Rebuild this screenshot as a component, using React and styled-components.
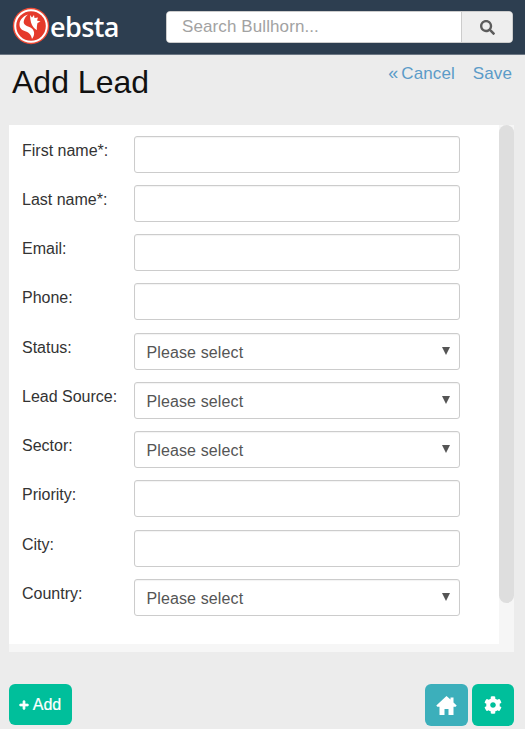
import React from "react";
import styled, { createGlobalStyle } from "styled-components";
import { FaCog, FaSearch, FaPlus } from "react-icons/fa";

const Global = createGlobalStyle`
  html, body { margin: 0; padding: 0; background: #ececec; }
  body { font-family: "Liberation Sans", Arial, sans-serif; }
  * { box-sizing: border-box; }
`;

const Page = styled.div`
  width: 525px; height: 729px; display: flex; flex-direction: column; overflow: hidden; background: #ececec;
`;
const Header = styled.header`
  height: 55px; flex: none; background: #2d3e50; border-bottom: 1px solid #6b7683;
  display: flex; align-items: flex-start; padding: 11px 12px 0 12px;
`;
const Brand = styled.div`
  width: 154px; height: 32px; display: flex; align-items: center; gap: 2px; margin-top: -1px;
`;
const BrandName = styled.span`
  color: #fff; font-family: "Open Sans", sans-serif; font-size: 27px; font-weight: 600; line-height: 32px; letter-spacing: -0.6px; margin-top: 2px; margin-left: -2px;
`;
const Search = styled.div`
  width: 347px; height: 32px; display: flex; border-radius: 4px; overflow: hidden; border: 1px solid #ccc; background: #fff;
`;
const SearchInput = styled.div`
  flex: 1; color: #a2a2a2; font-size: 17px; letter-spacing: 0.1px; line-height: 29px; padding-left: 15px; background: #fff;
`;
const SearchBtn = styled.div`
  width: 51px; background: #eee; border-left: 1px solid #ccc; display: flex; align-items: center; justify-content: center; color: #5c5c5c; font-size: 15px;
`;
const TitleBar = styled.div`
  height: 70px; flex: none; display: flex; justify-content: space-between; padding: 8px 13px 0 12px;
`;
const Title = styled.h1`
  margin: 0; font-size: 32px; font-weight: 400; color: #111; line-height: 38px;
`;
const Links = styled.div`
  display: flex; gap: 18px; font-size: 17px; letter-spacing: 0.1px; line-height: 24px; color: #5b9bc8; margin-top: -1px;
`;
const LinkText = styled.a`
  color: inherit; text-decoration: none;
`;
const Chevrons = styled.span`
  margin-right: 3px; font-size: 18px; line-height: 0;
`;
const Panel = styled.section`
  margin-left: 9px; width: 505px; height: 527px; flex: none; display: flex; background: #f6f6f6;
`;
const Form = styled.div`
  width: 490px; height: 519px; background: #fff; padding: 10.8px 0 0 13px; display: flex; flex-direction: column; gap: 12.22px;
`;
const Row = styled.div`
  display: flex; height: 37px;
`;
const Label = styled.label`
  width: 112px; font-size: 16px; line-height: 18px; padding-top: 6px; color: #333;
`;
const Field = styled.div`
  width: 326px; height: 37px; border: 1px solid #ccc; border-radius: 3px; background: #fff;
  box-shadow: inset 0 1px 1px rgba(0,0,0,.05); display: flex; align-items: center; justify-content: space-between;
  padding: 3px 9px 0 11.5px; font-size: 16px; letter-spacing: 0.12px; color: #555;
`;
const Caret = styled.span`
  width: 0; height: 0; border-left: 4px solid transparent; border-right: 4px solid transparent; border-top: 8px solid #555; margin-top: -4px;
`;
const Scrollbar = styled.div`
  width: 15px; background: #f6f6f6;
`;
const Thumb = styled.div`
  height: 478px; background: #dedede; border-radius: 8px;
`;
const Footer = styled.footer`
  flex: 1; display: flex; justify-content: space-between; padding: 32px 11px 3px 9px;
`;
const AddBtn = styled.button`
  width: 63px; height: 41px; border: 0; border-radius: 6px; background: #00bf9b; color: #fff; font: 16px "Liberation Sans", sans-serif;
  display: flex; align-items: center; justify-content: center; gap: 4px; padding: 0 1px 0 0;
  -webkit-text-stroke: 0.2px #fff;
  svg { font-size: 10px; stroke: #fff; stroke-width: 40px; }
`;
const IconGroup = styled.div`
  display: flex; gap: 4px;
`;
const IconBtn = styled.button`
  width: ${p => p.$w}px; height: 42px; border: 0; border-radius: 6px; background: ${p => p.$bg}; color: #fff; font-size: ${p => p.$size}px;
  display: flex; align-items: center; justify-content: center; padding: 0;
`;

const Logo = () => (
  <svg width="38" height="38" viewBox="0 0 38 38">
    <circle cx="19" cy="19" r="18.2" fill="#ef4a35" />
    <circle cx="19" cy="19" r="16.8" fill="#fff" />
    <circle cx="19" cy="19" r="14.8" fill="#e53a2b" />
    <path d="M16 7.5c-5 1.5-8.5 5.5-8.5 10 0 4 3 6 6.5 7 3 1 5 3 6 7.5 2.5-3 3-7 .5-10-2-2.5-7-2.5-8.5-5.5-1-2.5 1-6.5 4-9z" fill="#fff" />
    <path d="M18 8l2 2.5L22 8l.5 3 3.5-.5-1 3 3.5 1-3 1.5c-.5 2.5-1 5-.5 7-2.5-1-5-4-6-7.5-.7-2.5-.8-5-1-7.5z" fill="#fff" />
  </svg>
);

const HomeIcon = () => (
  <svg width="21" height="19" viewBox="0 0 21 19" fill="#fff">
    <path d="M10.5 0L.3 9.4l1 1.3H3.5V19h5v-6h4v6h5v-8.3h2.2l1-1.3-3.2-3V1.5h-3v2.1z" />
  </svg>
);

const rows = [
  ["First name*:"], ["Last name*:"], ["Email:"], ["Phone:"], ["Status:", 1],
  ["Lead Source:", 1], ["Sector:", 1], ["Priority:"], ["City:"], ["Country:", 1],
];

export default function App() {
  return (
    <Page>
      <Global />
      <Header>
        <Brand><Logo /><BrandName>ebsta</BrandName></Brand>
        <Search>
          <SearchInput>Search Bullhorn...</SearchInput>
          <SearchBtn><FaSearch /></SearchBtn>
        </Search>
      </Header>
      <TitleBar>
        <Title>Add Lead</Title>
        <Links>
          <LinkText><Chevrons>«</Chevrons>Cancel</LinkText>
          <LinkText>Save</LinkText>
        </Links>
      </TitleBar>
      <Panel>
        <Form>
          {rows.map(([label, select]) => (
            <Row key={label}>
              <Label>{label}</Label>
              <Field>{select ? <>Please select<Caret /></> : null}</Field>
            </Row>
          ))}
        </Form>
        <Scrollbar><Thumb /></Scrollbar>
      </Panel>
      <Footer>
        <AddBtn><FaPlus />Add</AddBtn>
        <IconGroup>
          <IconBtn $w={43} $bg="#3cafbb" $size={20}><HomeIcon /></IconBtn>
          <IconBtn $w={42} $bg="#00bf9b" $size={18}><FaCog /></IconBtn>
        </IconGroup>
      </Footer>
    </Page>
  );
}
